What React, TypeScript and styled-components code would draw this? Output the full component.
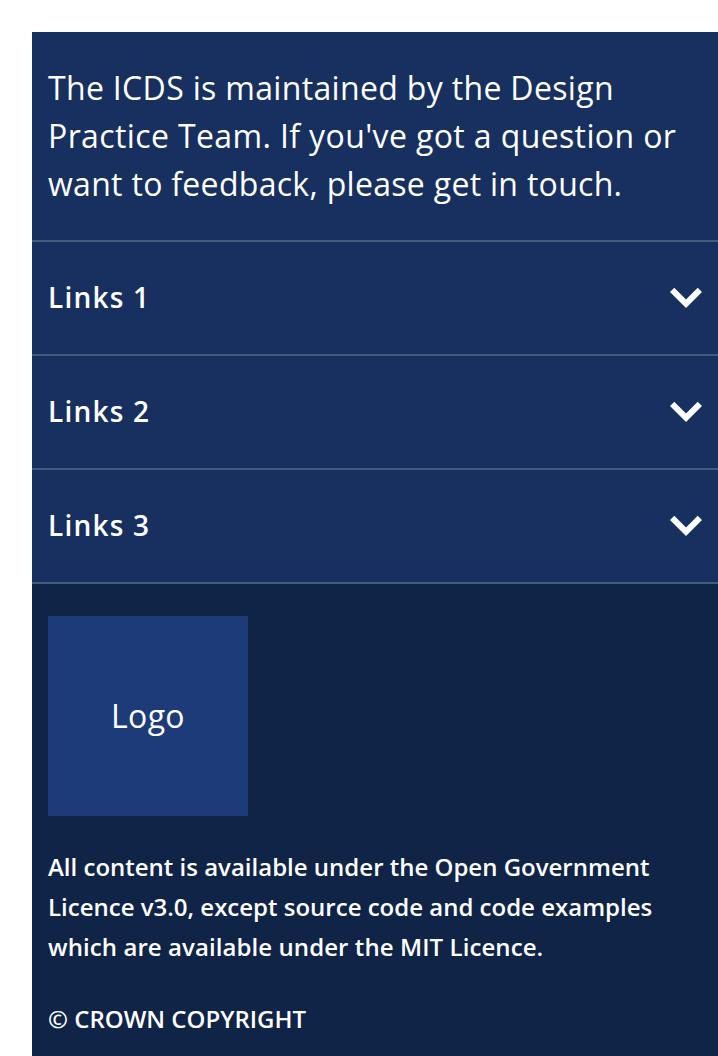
import React from "react";
import styled, { createGlobalStyle } from "styled-components";

const GlobalStyle = createGlobalStyle`
  * { box-sizing: border-box; }
  body { margin: 0; background: #fff; overflow: hidden; font-family: "Open Sans", sans-serif; }
`;

const Page = styled.div`
  height: 1056px;
  padding: 32px 0 0 32px;
  display: flex;
  overflow: hidden;
`;

const Footer = styled.footer`
  flex: 1;
  display: flex;
  flex-direction: column;
  background: #17305f;
  color: #fff;
`;

const Description = styled.p`
  margin: 0;
  padding: 32px 16px;
  font-size: 32px;
  line-height: 48px;
`;

const Line = styled.span<{ $tracking?: number }>`
  display: block;
  white-space: nowrap;
  letter-spacing: ${({ $tracking = 0 }) => $tracking}px;
`;

const LinkGroup = styled.button`
  display: flex;
  flex: 0 0 114px;
  align-items: center;
  justify-content: space-between;
  padding: 0 16px;
  border: 0;
  border-top: 2px solid #455981;
  background: transparent;
  color: inherit;
  font: 600 28px/40px "Open Sans", sans-serif;
  letter-spacing: 1.2px;
`;

const GroupLabel = styled.span`
  padding-bottom: 2px;
`;

const Chevron = styled.svg`
  width: 48px;
  height: 48px;
  margin-right: -8px;
  fill: currentColor;
`;

const Bottom = styled.div`
  flex: 1;
  padding: 32px 16px 0;
  border-top: 2px solid #455981;
  background: #102448;
`;

const Logo = styled.div`
  display: flex;
  align-items: center;
  justify-content: center;
  width: 200px;
  height: 200px;
  margin-bottom: 31px;
  padding-bottom: 2px;
  background: #1c3b78;
  font-size: 32px;
  letter-spacing: 0.3px;
`;

const Caption = styled.p`
  margin: 0 0 32px;
  font-size: 24px;
  font-weight: 600;
  line-height: 40px;
`;

const groups = ["Links 1", "Links 2", "Links 3"];

export default function App() {
  return (
    <Page>
      <GlobalStyle />
      <Footer>
        <Description>
          <Line $tracking={0.33}>The ICDS is maintained by the Design</Line>
          <Line $tracking={0.38}>Practice Team. If you've got a question or</Line>
          <Line $tracking={0.3}>want to feedback, please get in touch.</Line>
        </Description>
        {groups.map((label) => (
          <LinkGroup key={label}>
            <GroupLabel>{label}</GroupLabel>
            <Chevron viewBox="0 0 24 24" aria-hidden="true">
              <path d="M6.15 6.85 12 12.7l5.85-5.85L20 9l-8 8-8-8z" />
            </Chevron>
          </LinkGroup>
        ))}
        <Bottom>
          <Logo>Logo</Logo>
          <Caption>
            <Line>All content is available under the Open Government</Line>
            <Line>Licence v3.0, except source code and code examples</Line>
            <Line $tracking={0.08}>which are available under the MIT Licence.</Line>
          </Caption>
          <Caption>© CROWN COPYRIGHT</Caption>
        </Bottom>
      </Footer>
    </Page>
  );
}
